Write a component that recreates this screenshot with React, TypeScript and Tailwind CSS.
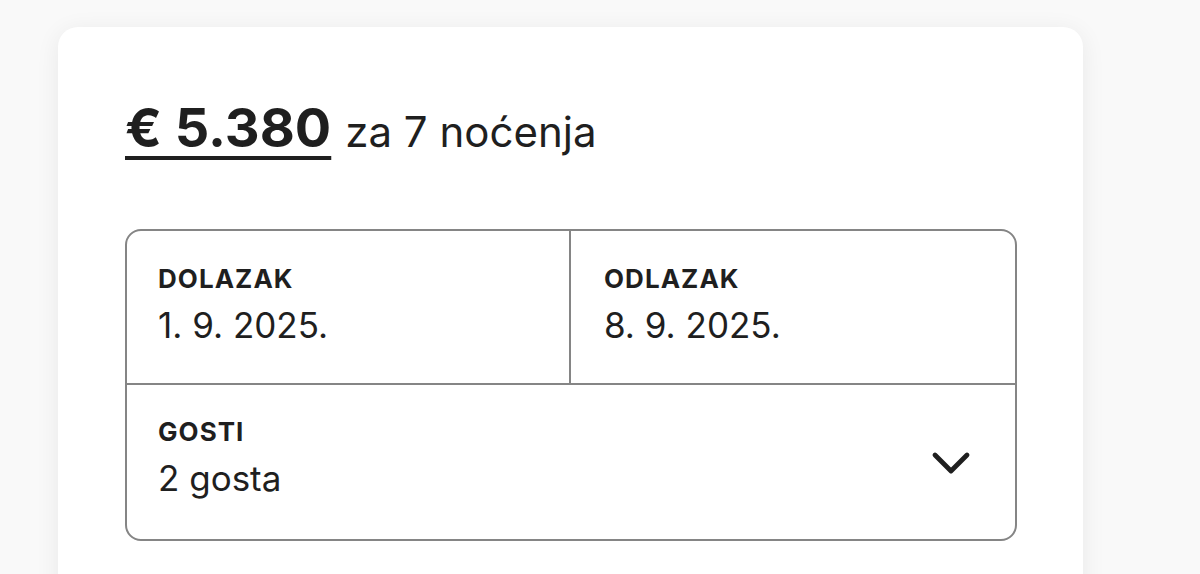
import { ChevronDown } from 'lucide-react'

function Field({ label, value }: { label: string; value: string }) {
  return (
    <div className="flex flex-col">
      <span className="text-[26px] font-bold uppercase leading-none tracking-[0.04em] text-[#1f1f1f]">
        {label}
      </span>
      <span className="mt-[16px] text-[35px] leading-none text-[#1f1f1f]">{value}</span>
    </div>
  )
}

export default function App() {
  return (
    <div
      className="h-[574px] w-[1200px] overflow-hidden bg-[#f9f9f9] pl-[58px] pt-[27px]"
      style={{ fontFamily: 'Inter, "Noto Sans", sans-serif' }}
    >
      <div className="h-[600px] w-[1025px] rounded-[20px] bg-white px-[67px] pt-[74px] shadow-[0_4px_24px_rgba(0,0,0,0.07)]">
        {/* price */}
        <div className="flex items-baseline text-[#1f1f1f]">
          <span className="text-[54px] font-bold leading-none underline decoration-[4px] underline-offset-[9px]">
            € 5.380
          </span>
          <span className="ml-[14px] text-[42px] leading-none">za 7 noćenja</span>
        </div>

        {/* booking box */}
        <div className="mt-[74px] w-[892px] overflow-hidden rounded-[16px] border-2 border-[#858585]">
          <div className="flex h-[154px] border-b-2 border-[#858585]">
            <div className="flex flex-1 items-start border-r-2 border-[#858585] pl-[31px] pt-[35px]">
              <Field label="Dolazak" value="1. 9. 2025." />
            </div>
            <div className="flex flex-1 items-start pl-[33px] pt-[35px]">
              <Field label="Odlazak" value="8. 9. 2025." />
            </div>
          </div>
          <div className="flex h-[154px] items-start justify-between pl-[31px] pr-[32px] pt-[34px]">
            <Field label="Gosti" value="2 gosta" />
            <ChevronDown className="mt-[12px] h-[64px] w-[64px] text-[#1f1f1f]" strokeWidth={1.8} />
          </div>
        </div>
      </div>
    </div>
  )
}
